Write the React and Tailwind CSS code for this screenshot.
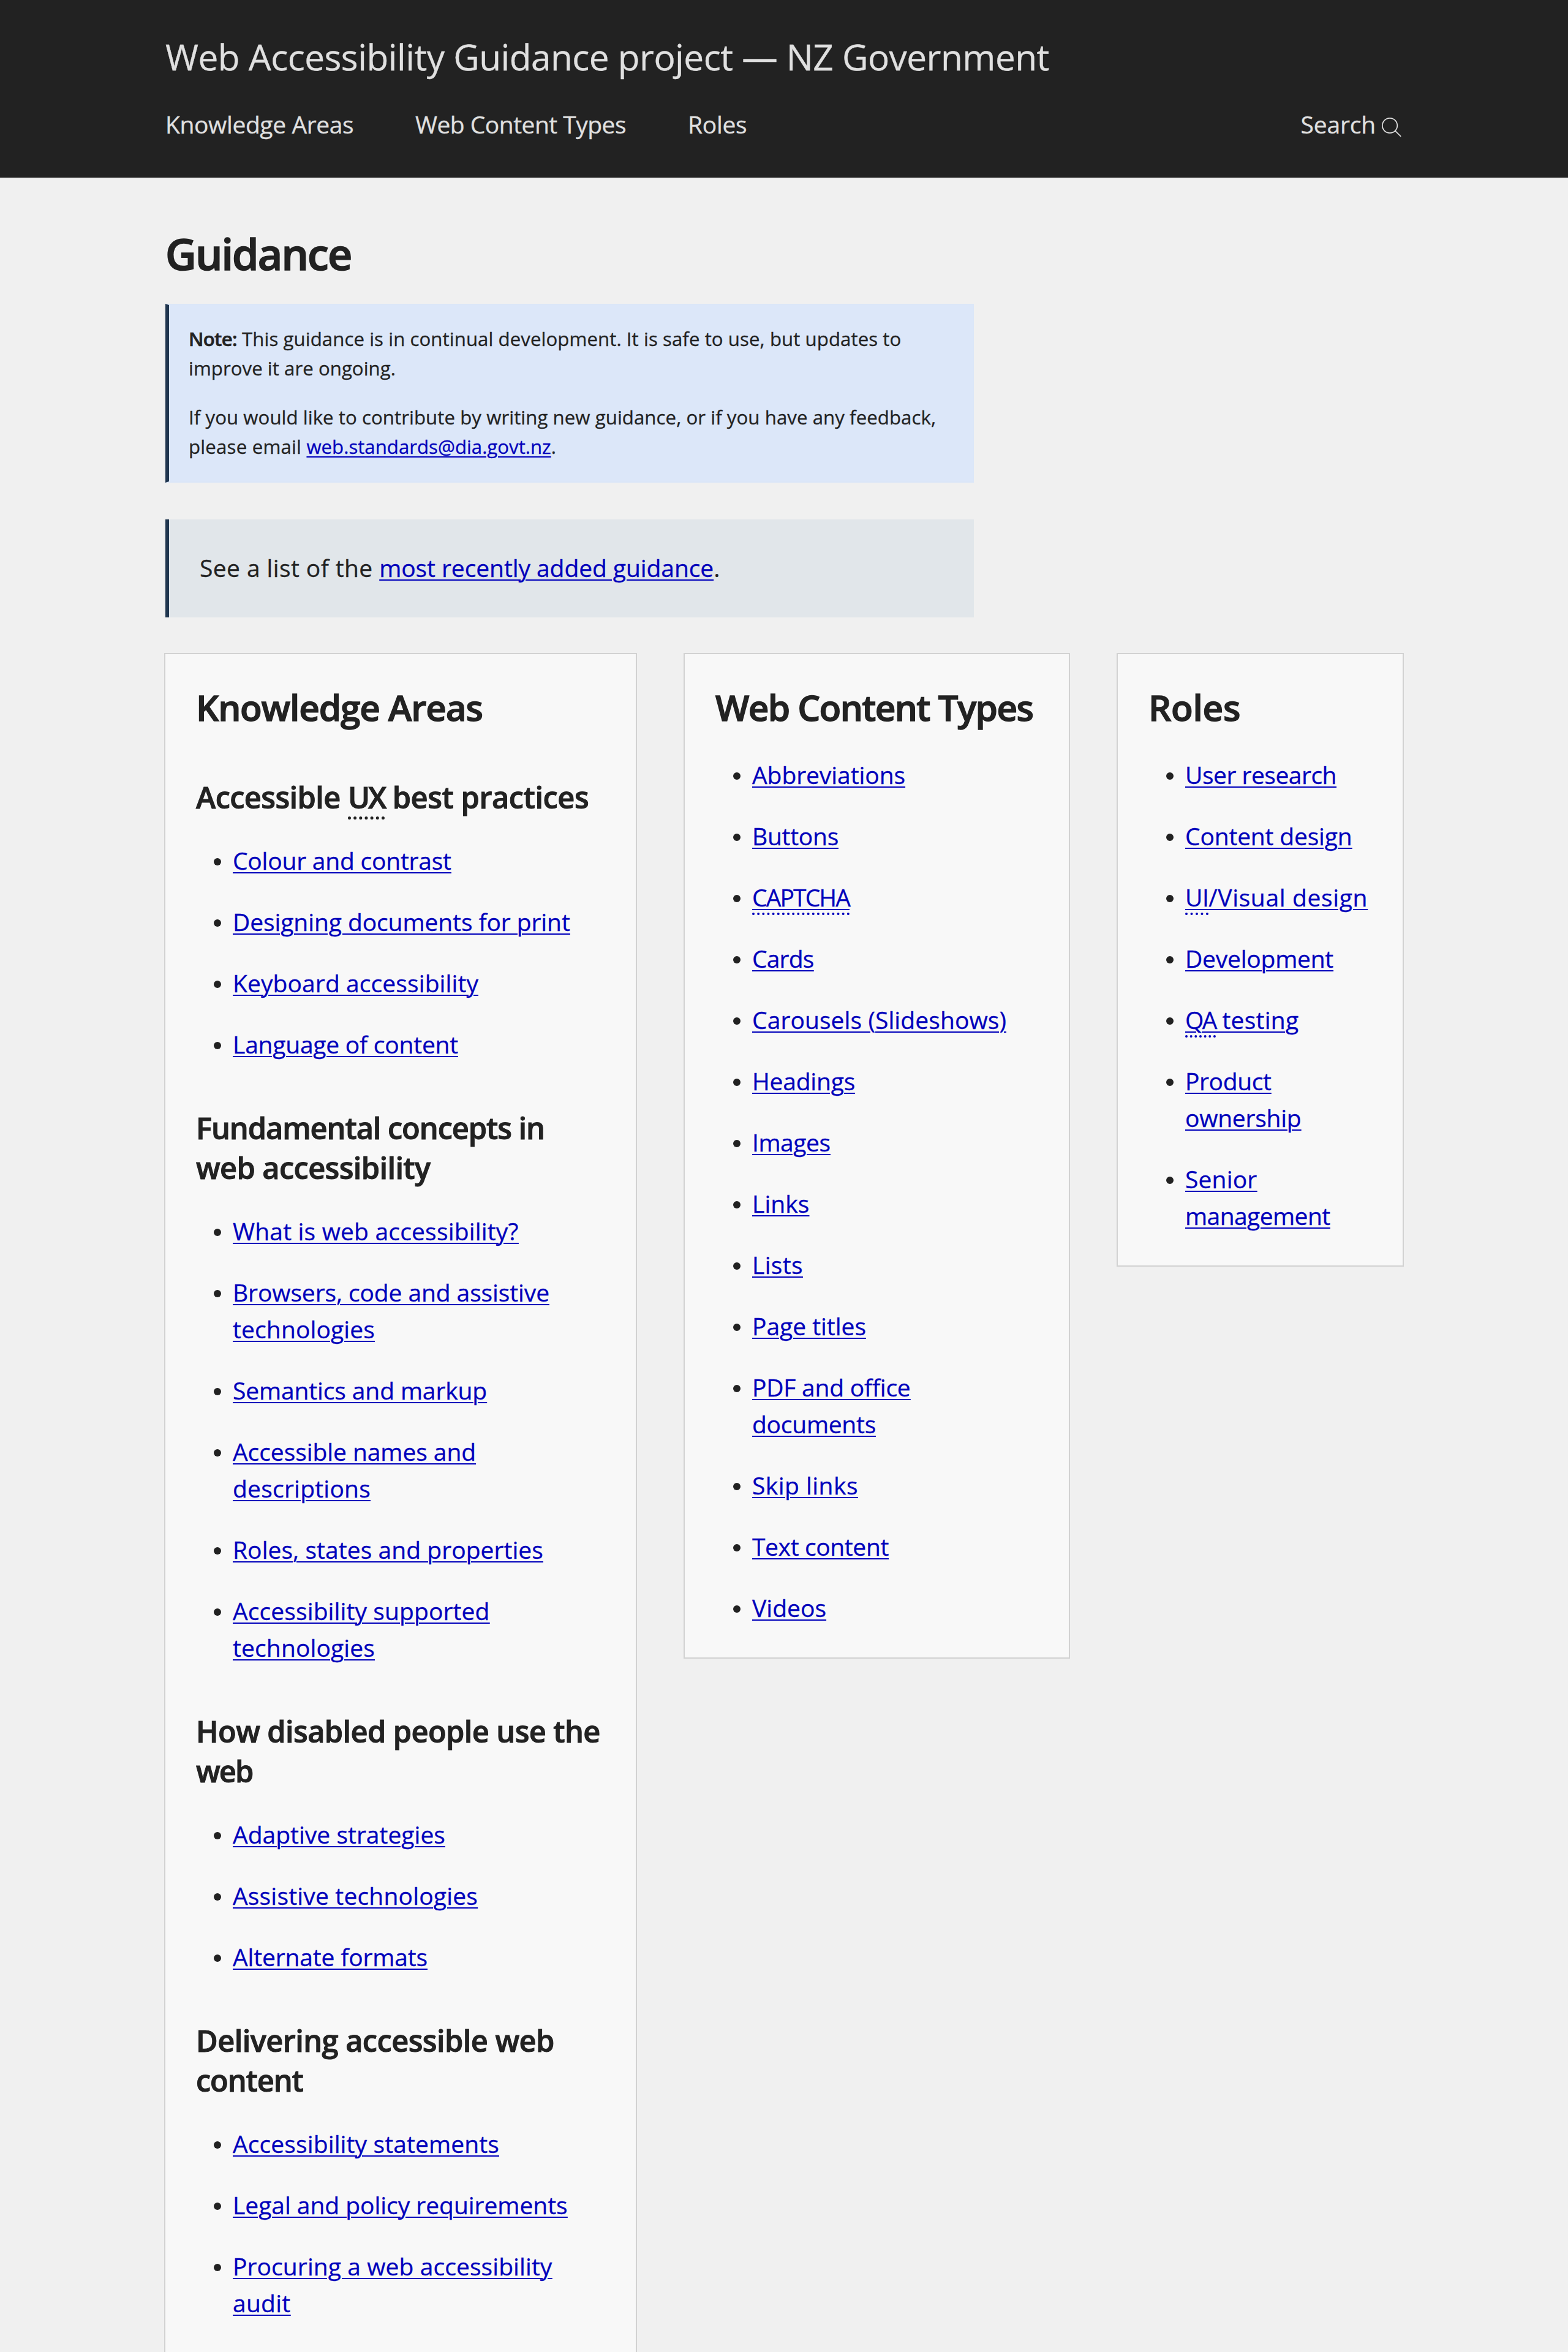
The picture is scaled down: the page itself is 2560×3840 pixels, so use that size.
const link = 'text-[#0000bb] underline decoration-[2px] underline-offset-[4px]';

function Abbr({ children, className = '' }) {
  return (
    <abbr className={`-mb-1 inline-block border-b-4 border-dotted border-current leading-[51px] underline decoration-[2px] underline-offset-[4px] ${className}`}>
      {children}
    </abbr>
  );
}

// Each item is a list of lines; each line is [text, tracking class].
function LinkList({ items, className = 'mt-[41px]' }) {
  return (
    <ul className={`flex flex-col gap-10 pl-[29px] text-[39px] leading-[60px] ${className}`}>
      {items.map((lines, i) => (
        <li key={i} className="flex items-start">
          <span className="mt-[26px] mr-[19px] size-3 shrink-0 rounded-full bg-[#222222]" />
          <a className={link}>
            {lines.map(([text, tracking], j) => (
              <span key={j} className={`block whitespace-pre ${tracking}`}>
                <span className={link}>{text}</span>
              </span>
            ))}
          </a>
        </li>
      ))}
    </ul>
  );
}

function Card({ title, tracking, width, children }) {
  return (
    <section className={`shrink-0 border-2 border-[#d2d2d2] bg-[#f8f8f8] px-[50px] pt-[47px] pb-[51px] ${width}`}>
      <h2 className={`text-[58.5px] leading-[78px] font-semibold whitespace-nowrap [-webkit-text-stroke:1.3px_#222222] ${tracking}`}>{title}</h2>
      {children}
    </section>
  );
}

const ux = [
  [['Colour and contrast', 'tracking-[-0.22px]']],
  [['Designing documents for print', 'tracking-[-0.09px]']],
  [['Keyboard accessibility', 'tracking-[0.09px]']],
  [['Language of content', 'tracking-[-0.23px]']],
];

const fundamentals = [
  [['What is web accessibility?', 'tracking-[0.18px]']],
  [['Browsers, code and assistive', 'tracking-[-0.11px]'], ['technologies', 'tracking-[0.12px]']],
  [['Semantics and markup', 'tracking-[-0.13px]']],
  [['Accessible names and', 'tracking-[-0.07px]'], ['descriptions', 'tracking-[0.22px]']],
  [['Roles, states and properties', 'tracking-[0.05px]']],
  [['Accessibility supported', 'tracking-[0.1px]'], ['technologies', 'tracking-[0.12px]']],
];

const people = [
  [['Adaptive strategies', 'tracking-[0.01px]']],
  [['Assistive technologies', 'tracking-[0.18px]']],
  [['Alternate formats', 'tracking-[-0.15px]']],
];

const delivering = [
  [['Accessibility statements', 'tracking-[0.11px]']],
  [['Legal and policy requirements', 'tracking-[-0.04px]']],
  [['Procuring a web accessibility', 'tracking-[0.08px]'], ['audit', 'tracking-[0.26px]']],
];

const contentTypes = [
  [['Abbreviations', 'tracking-[-0.07px]']],
  [['Buttons', 'tracking-[-0.27px]']],
  [[<Abbr key="captcha">CAPTCHA</Abbr>, 'tracking-[-1.88px]']],
  [['Cards', 'tracking-[-0.82px]']],
  [['Carousels (Slideshows)', 'tracking-[0.08px]']],
  [['Headings', 'tracking-[-0.21px]']],
  [['Images', 'tracking-[-0.44px]']],
  [['Links', 'tracking-[0.02px]']],
  [['Lists', 'tracking-[0.3px]']],
  [['Page titles', 'tracking-[-0.03px]']],
  [['PDF and office', 'tracking-[-0.23px]'], ['documents', 'tracking-[-0.26px]']],
  [['Skip links', 'tracking-[0.46px]']],
  [['Text content', 'tracking-[-0.38px]']],
  [['Videos', 'tracking-[0.02px]']],
];

const roles = [
  [['User research', 'tracking-[-0.5px]']],
  [['Content design', 'tracking-[-0.18px]']],
  [[<span key="ui"><Abbr className="tracking-[-0.5px]">UI</Abbr>/Visual design</span>, 'tracking-[0.64px]']],
  [['Development', 'tracking-[-0.23px]']],
  [[<span key="qa"><Abbr className="tracking-[-2.5px]">QA</Abbr>{' testing'}</span>, 'tracking-[0.25px]']],
  [['Product', 'tracking-[-0.39px]'], ['ownership', 'tracking-[-0.25px]']],
  [['Senior', 'tracking-[0.16px]'], ['management', 'tracking-[-0.57px]']],
];

const h3 = 'text-[48.75px] leading-[65px] font-semibold whitespace-nowrap [-webkit-text-stroke:1px_#222222]';

export default function App() {
  return (
    <div className="h-[3840px] w-[2560px] overflow-hidden bg-[#f0f0f0] font-['Open_Sans','Noto_Sans',sans-serif] text-[#222222] [-webkit-text-stroke:0.3px_currentColor]">
      <header className="h-[290px] bg-[#222222] px-[270px] pt-[47px] text-[#e0e0e0]">
        <div className="text-[58.5px] leading-[90px] tracking-[-0.53px] whitespace-nowrap">
          Web Accessibility Guidance project — NZ Government
        </div>
        <nav className="mt-9 flex text-[39px] leading-[60px] whitespace-nowrap">
          <a className="w-[408px] tracking-[-0.39px]">Knowledge Areas</a>
          <a className="w-[445px] tracking-[-0.53px]">Web Content Types</a>
          <a className="tracking-[-0.3px]">Roles</a>
          <a className="ml-auto flex items-start tracking-[-0.18px]">
            Search
            <svg className="mt-[17px] ml-[10px] h-[34px] w-[34px]" viewBox="0 0 34 34" fill="none" stroke="currentColor" strokeWidth="1.7">
              <circle cx="13.1" cy="15" r="12.2" />
              <path d="M21.8 23.6 31.2 32.8" />
            </svg>
          </a>
        </nav>
      </header>

      <main className="px-[268px] pt-[74px]">
        <h1 className="ml-[2px] text-[70px] leading-[100px] font-semibold tracking-[-1.9px] [-webkit-text-stroke:1.6px_#222222]">Guidance</h1>

        <div className="mt-8 ml-[2px] h-[292px] w-[1320px] border-2 border-l-[6px] border-[#dbe6f8] border-l-[#20364f] bg-[#dce7f9] px-8 pt-[31px] text-[31.2px] leading-[48px] whitespace-nowrap">
          <p>
            <strong className="font-semibold tracking-[-0.69px] [-webkit-text-stroke:0.6px_#222222]">Note:</strong>
            <span className="tracking-[0.07px]"> This guidance is in continual development. It is safe to use, but updates to</span>
            <br />
            <span className="tracking-[0.04px]">improve it are ongoing.</span>
          </p>
          <p className="mt-8">
            <span className="tracking-[0.06px]">If you would like to contribute by writing new guidance, or if you have any feedback,</span>
            <br />
            <span className="tracking-[0.2px]">please email </span>
            <a className={link}>web.standards@dia.govt.nz</a>.
          </p>
        </div>

        <div className="mt-[60px] ml-[2px] h-40 w-[1320px] border-l-[6px] border-[#20364f] bg-[#e1e6ea] px-[50px] pt-[49px] text-[39px] leading-[60px] whitespace-nowrap">
          <span className="tracking-[0.4px]">See a list of the </span>
          <a className={`tracking-[-0.08px] ${link}`}>most recently added guidance</a>.
        </div>

        <div className="mt-[58px] flex items-start gap-[76px]">
          <Card title="Knowledge Areas" tracking="tracking-[-1.2px]" width="w-[772px] h-[2900px]">
            <h3 className={`mt-[76px] ${h3}`}>
              <span className="tracking-[-0.6px]">Accessible </span>
              <abbr className="-mb-[5px] inline-block border-b-[5px] border-dotted border-current leading-[64px] tracking-[-3px] no-underline">UX</abbr>
              <span className="tracking-[-0.45px]"> best practices</span>
            </h3>
            <LinkList items={ux} />
            <h3 className={`mt-[74px] ${h3}`}>
              <span className="block tracking-[-1.08px]">Fundamental concepts in</span>
              <span className="block tracking-[-0.63px]">web accessibility</span>
            </h3>
            <LinkList items={fundamentals} />
            <h3 className={`mt-[74px] ${h3}`}>
              <span className="block tracking-[-0.62px]">How disabled people use the</span>
              <span className="block tracking-[-1.92px]">web</span>
            </h3>
            <LinkList items={people} />
            <h3 className={`mt-[74px] ${h3}`}>
              <span className="block tracking-[-0.57px]">Delivering accessible web</span>
              <span className="block tracking-[-1.11px]">content</span>
            </h3>
            <LinkList items={delivering} />
          </Card>
          <Card title="Web Content Types" tracking="tracking-[-1.62px]" width="w-[631px]">
            <LinkList items={contentTypes} className="mt-[42px]" />
          </Card>
          <Card title="Roles" tracking="tracking-[-0.3px]" width="w-[469px]">
            <LinkList items={roles} className="mt-[42px]" />
          </Card>
        </div>
      </main>
    </div>
  );
}
